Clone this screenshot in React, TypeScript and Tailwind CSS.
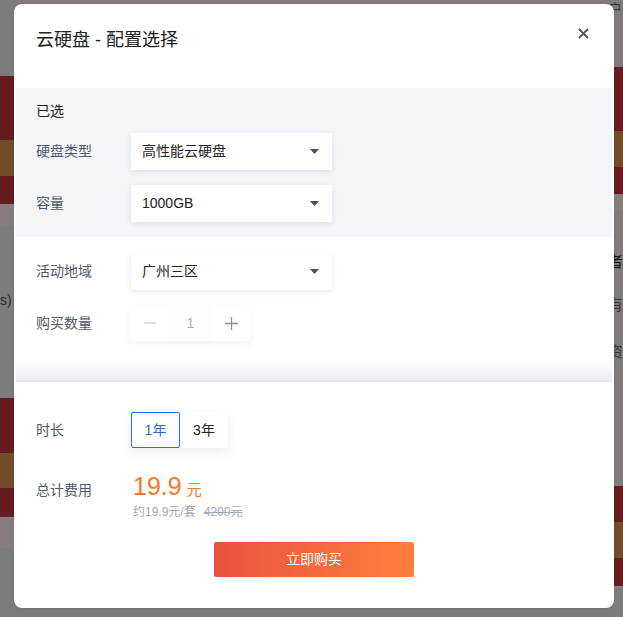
import React from "react";

const font = { fontFamily: '"Liberation Sans", "Noto Sans CJK SC", sans-serif' };

const Caret = () => (
  <svg width="9" height="5" viewBox="0 0 9 5" className="shrink-0">
    <path d="M0 0h9L4.5 5z" fill="#4b4f58" />
  </svg>
);

const Select = ({ value }: { value: string }) => (
  <div className="flex h-[37px] w-[201px] items-center justify-between bg-white pl-[11px] pr-[13px] text-[14px] text-[#222] shadow-[0_2px_6px_rgba(40,50,80,0.10)]">
    <span>{value}</span>
    <Caret />
  </div>
);

const Label = ({ children }: { children: React.ReactNode }) => (
  <div className="w-[95px] shrink-0 text-[14px] text-[#4f596c]">{children}</div>
);

const Row = ({ label, children }: { label: string; children: React.ReactNode }) => (
  <div className="flex items-center">
    <Label>{label}</Label>
    {children}
  </div>
);

/* dimmed page behind the dialog, two columns of coloured bands */
const Backdrop = () => (
  <div className="flex h-[617px] w-full bg-[#7f7b7a]">
    <div className="relative w-[311px]">
      <div className="h-[76px]" />
      <div className="h-[64px] bg-[#661c1f]" />
      <div className="h-[36px] bg-[#744c2b]" />
      <div className="h-[28px] bg-[#661c1f]" />
      <div className="h-[22px] bg-[#867e7d]" />
      <div className="h-[64px]" />
      <div className="text-[14px] leading-[20px] text-[#2e2b2b]">s)</div>
      <div className="h-[88px]" />
      <div className="h-[55px] bg-[#661c1f]" />
      <div className="h-[35px] bg-[#744c2b]" />
      <div className="h-[29px] bg-[#661c1f]" />
      <div className="h-[31px] bg-[#867e7d]" />
    </div>
    <div className="relative flex-1">
      <div className="h-[67px] pl-[301px] text-[14px] leading-[18px] text-[#3a3636]">
        <div>户</div>
      </div>
      <div className="h-[64px] bg-[#661c1f]" />
      <div className="h-[36px] bg-[#744c2b]" />
      <div className="h-[27px] bg-[#661c1f]" />
      <div className="h-[17px] bg-[#867e7d]" />
      <div className="h-[234px] pl-[301px] text-[15px] leading-[20px]">
        <div className="mt-[41px] text-[#161414]">者</div>
        <div className="mt-[23px] text-[#3a3636]">有</div>
        <div className="mt-[27px] text-[#3a3636]">资</div>
      </div>
      <div className="h-[36px] bg-[#661c1f]" />
      <div className="h-[36px] bg-[#744c2b]" />
      <div className="h-[28px] bg-[#661c1f]" />
      <div className="h-[2px] bg-[#8b8382]" />
    </div>
  </div>
);

export default function App() {
  return (
    <div className="relative h-[617px] w-[623px] overflow-hidden" style={font}>
      <Backdrop />

      <div className="absolute left-[14px] top-[4px] w-[600px] rounded-[8px] bg-white shadow-[0_0_2px_rgba(0,0,0,0.15)]">
        {/* header */}
        <div className="relative h-[84px] px-[22px] pt-[23px]">
          <div className="text-[18px] leading-[26px] text-[#222]">云硬盘 - 配置选择</div>
          <svg width="11" height="11" viewBox="0 0 11 11" className="absolute right-[25px] top-[24px]">
            <path d="M1 1l9 9M10 1l-9 9" stroke="#555" strokeWidth="1.8" />
          </svg>
        </div>

        {/* selected config */}
        <div className="mx-[2px] flex flex-col bg-[#f4f5f9] px-[20px] pb-[15px] pt-[13px]">
          <div className="text-[14px] leading-[20px] text-[#222]">已选</div>
          <div className="mt-[12px] flex flex-col gap-[15px]">
            <Row label="硬盘类型">
              <Select value="高性能云硬盘" />
            </Row>
            <Row label="容量">
              <Select value="1000GB" />
            </Row>
          </div>
        </div>

        <div className="flex flex-col gap-[15px] px-[22px] pt-[16px]">
          <Row label="活动地域">
            <Select value="广州三区" />
          </Row>
          <Row label="购买数量">
            <div className="flex h-[36px] items-stretch shadow-[0_3px_8px_rgba(40,50,80,0.06)]">
              <div className="flex w-[37px] items-center justify-center bg-white">
                <svg width="12" height="2" viewBox="0 0 12 2">
                  <path d="M0 1h12" stroke="#cfd3dc" strokeWidth="1.3" />
                </svg>
              </div>
              <div className="flex w-[45px] items-center justify-center bg-[#fdfdfe] text-[14px] text-[#a3a9b6]">1</div>
              <div className="flex w-[37px] items-center justify-center bg-white">
                <svg width="13" height="13" viewBox="0 0 13 13">
                  <path d="M0 6.5h13M6.5 0v13" stroke="#8a92a3" strokeWidth="1.3" />
                </svg>
              </div>
            </div>
          </Row>
        </div>

        <div className="mx-[2px] mt-[19px] h-[22px] border-b border-[#e3e6ee] bg-gradient-to-b from-white to-[#e9ecf3]" />

        <div className="flex flex-col px-[22px] pb-[31px] pt-[30px]">
          <Row label="时长">
            <div className="flex h-[36px] shadow-[0_4px_12px_rgba(40,50,80,0.08)]">
              <div className="flex w-[49px] items-center justify-center rounded-[2px] border border-[#2d6be0] bg-white text-[14px] text-[#2d6be0]">
                1年
              </div>
              <div className="flex w-[48px] items-center justify-center bg-white text-[14px] text-[#222]">3年</div>
            </div>
          </Row>

          <div className="mt-[23px] flex items-baseline">
            <Label>总计费用</Label>
            <div className="flex items-baseline text-[#f57a1f]">
              <span className="ml-[2px] text-[25px] leading-[30px]">19.9</span>
              <span className="ml-[5px] text-[15px]">元</span>
            </div>
          </div>
          <div className="ml-[97px] mt-[2px] flex gap-[8px] text-[12px] leading-[16px] text-[#a3a9b6]">
            <span>约19.9元/套</span>
            <span className="line-through">4200元</span>
          </div>

          <div className="mt-[22px] flex justify-center">
            <div className="flex h-[35px] w-[200px] items-center justify-center rounded-[2px] bg-gradient-to-r from-[#e8523f] to-[#ff7e3b] text-[14px] text-white">
              立即购买
            </div>
          </div>
        </div>
      </div>
    </div>
  );
}
